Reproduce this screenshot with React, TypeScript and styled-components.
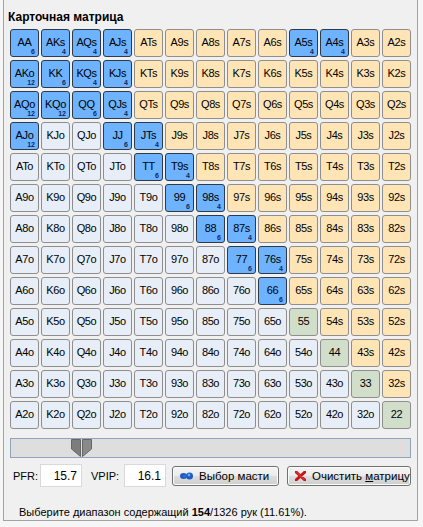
import styled, { createGlobalStyle } from 'styled-components';

const GlobalStyle = createGlobalStyle`
  html, body {
    margin: 0;
    padding: 0;
    background: #f6f6f6;
    font-family: "Liberation Sans", Arial, sans-serif;
  }
`;

const RANKS = 'AKQJT98765432';

const SELECTED = new Set([
  'AA', 'AKs', 'AQs', 'AJs', 'A5s', 'A4s',
  'AKo', 'KK', 'KQs', 'KJs',
  'AQo', 'KQo', 'QQ', 'QJs',
  'AJo', 'JJ', 'JTs',
  'TT', 'T9s', '99', '98s', '88', '87s', '77', '76s', '66',
]);

type Kind = 'pair' | 'suited' | 'offsuit';

const combos: Record<Kind, number> = { pair: 6, suited: 4, offsuit: 12 };

const fills: Record<Kind, string> = {
  pair: '#d1dec9',
  suited: '#ffe5b6',
  offsuit: '#e7eef7',
};

const Panel = styled.div`
  margin-left: 3px;
  width: 415px;
  height: 521px;
  box-sizing: border-box;
  border: 1px solid #a3a3a3;
  border-top: none;
  background: #f0f0f0;
  padding: 10px 0 0 4px;
`;

const Title = styled.div`
  font-weight: bold;
  font-size: 12px;
  color: #000;
  height: 19px;
  line-height: 15px;
`;

const Matrix = styled.div`
  display: grid;
  grid-template-columns: repeat(13, 29px);
  grid-auto-rows: 28px;
  column-gap: 2px;
  row-gap: 3px;
  margin-left: 2px;
`;

const Cell = styled.div<{ $fill: string; $on: boolean }>`
  position: relative;
  box-sizing: border-box;
  border: 1px solid ${(p) => (p.$on ? '#2e3a48' : '#8e8e8e')};
  border-radius: 3px;
  background: ${(p) => p.$fill};
  display: flex;
  align-items: center;
  justify-content: center;
  color: #000;
`;

const HandLabel = styled.span`
  font-size: 11px;
  line-height: 10px;
  letter-spacing: -0.4px;
  margin-bottom: 3px;
`;

const Count = styled.span`
  position: absolute;
  right: 3px;
  bottom: 1px;
  font-size: 7px;
  font-weight: bold;
  line-height: 6px;
  color: #14275e;
`;

const Slider = styled.div`
  position: relative;
  margin: 9px 0 0 2px;
  width: 401px;
  height: 20px;
  box-sizing: border-box;
  border: 1px solid #8fa5bd;
  background: #dedede;
`;

const Thumb = styled.svg`
  position: absolute;
  left: 60px;
  top: 0px;
`;

const Controls = styled.div`
  display: flex;
  align-items: center;
  height: 23px;
  margin-top: 6px;
  font-size: 11px;
  color: #000;
`;

const Label = styled.span<{ $left: number }>`
  margin-left: ${(p) => p.$left}px;
  width: ${(p) => (p.$left > 5 ? 33 : 27)}px;
`;

const Field = styled.div`
  width: 42px;
  height: 23px;
  box-sizing: border-box;
  border: 1px solid #d9d9d9;
  background: #fff;
  display: flex;
  align-items: center;
  justify-content: flex-end;
  padding-right: 4px;
  font-size: 12px;
`;

const Button = styled.div<{ $width: number; $left: number }>`
  width: ${(p) => p.$width}px;
  margin-left: ${(p) => p.$left}px;
  height: 20px;
  box-sizing: border-box;
  border: 1px solid #707070;
  border-radius: 3px;
  background: linear-gradient(#f4f4f4, #ebebeb 50%, #dddddd 51%, #cfcfcf);
  box-shadow: inset 0 0 0 1px #fcfcfc;
  display: flex;
  align-items: center;
  gap: 6px;
  padding-left: 7px;
  font-size: 11.5px;
  white-space: nowrap;
`;

const Status = styled.div`
  margin: 19px 0 0 11px;
  font-size: 11px;
  color: #000;
`;

const kindOf = (i: number, j: number): Kind =>
  i === j ? 'pair' : j > i ? 'suited' : 'offsuit';

const handName = (i: number, j: number) => {
  if (i === j) return RANKS[i] + RANKS[j];
  if (j > i) return RANKS[i] + RANKS[j] + 's';
  return RANKS[j] + RANKS[i] + 'o';
};

const SuitIcon = () => (
  <svg width="13" height="8" viewBox="0 0 13 8">
    <ellipse cx="3.5" cy="4" rx="3.5" ry="3" fill="#1d5cc0" />
    <rect x="3" y="3" width="6" height="2" fill="#2a6fd6" />
    <circle cx="9.5" cy="4" r="3.5" fill="#1d5cc0" />
    <circle cx="9" cy="3" r="1.4" fill="#6aa6f0" />
  </svg>
);

const ClearIcon = () => (
  <svg width="11" height="10" viewBox="0 0 11 10">
    <path d="M1 1 L10 9 M10 1 L1 9" stroke="#c8141a" strokeWidth="3" strokeLinecap="round" />
    <path d="M1.5 1.2 L9.5 8.6" stroke="#f05050" strokeWidth="0.8" />
  </svg>
);

export default function App() {
  const cells = [];
  for (let i = 0; i < 13; i++) {
    for (let j = 0; j < 13; j++) {
      const name = handName(i, j);
      const kind = kindOf(i, j);
      const on = SELECTED.has(name);
      cells.push(
        <Cell key={name} $fill={on ? '#6db3ff' : fills[kind]} $on={on}>
          <HandLabel>{name}</HandLabel>
          {on && <Count>{combos[kind]}</Count>}
        </Cell>
      );
    }
  }

  return (
    <>
      <GlobalStyle />
      <Panel>
        <Title>Карточная матрица</Title>
        <Matrix>{cells}</Matrix>
        <Slider>
          <Thumb width="21" height="18" viewBox="0 0 21 18">
            <polygon points="0.5,0.5 9.5,0.5 9.5,17.5 0.5,10" fill="#7d7d7d" stroke="#666" />
            <polygon points="11.5,0.5 20.5,0.5 20.5,10 11.5,17.5" fill="#8a8a8a" stroke="#666" />
          </Thumb>
        </Slider>
        <Controls>
          <Label $left={5}>PFR:</Label>
          <Field>15.7</Field>
          <Label $left={9}>VPIP:</Label>
          <Field>16.1</Field>
          <Button $width={107} $left={6}>
            <SuitIcon />
            Выбор масти
          </Button>
          <Button $width={124} $left={8}>
            <ClearIcon />
            <span>
              Очистить <u>м</u>атрицу
            </span>
          </Button>
        </Controls>
        <Status>
          Выберите диапазон содержащий <b>154</b>/1326 рук (11.61%).
        </Status>
      </Panel>
    </>
  );
}
